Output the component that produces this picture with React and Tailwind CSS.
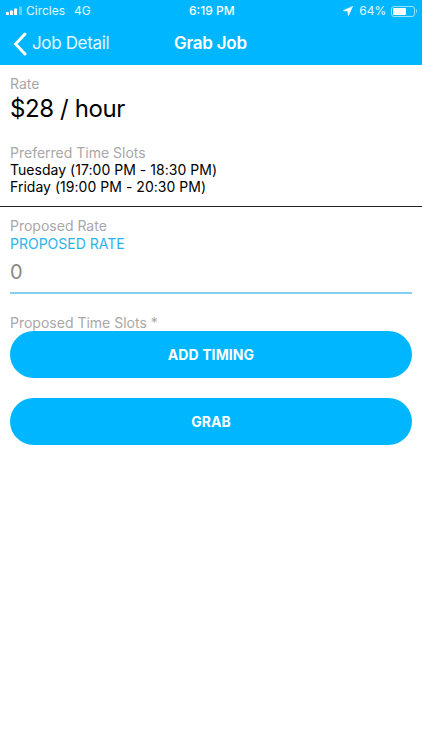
import React from "react";

export default function App() {
  return (
    <div className="w-[422px] h-[750px] bg-white flex flex-col overflow-hidden font-['Inter','Roboto',sans-serif]">
      <header className="h-[65px] bg-[#00b7ff] text-white flex flex-col shrink-0">
        <div className="h-[22px] flex items-center justify-between pl-[6px] pr-[5px] text-[12px] leading-[14px] relative">
          <div className="flex items-center">
            <svg width="18" height="10" viewBox="0 0 18 10" className="mr-[2px]">
              <rect x="0" y="6" width="3" height="3" rx="0.5" fill="#fff" />
              <rect x="4" y="4.5" width="3" height="4.5" rx="0.5" fill="#fff" />
              <rect x="8" y="2.5" width="3" height="6.5" rx="0.5" fill="#fff" />
              <rect x="13" y="0.5" width="3" height="8.5" rx="0.5" fill="#fff" fillOpacity="0.35" />
            </svg>
            <span className="opacity-90">Circles</span>
            <span className="ml-[9px] opacity-90">4G</span>
          </div>
          <span className="absolute left-[189px] font-medium">6:19 PM</span>
          <div className="flex items-center">
            <svg width="10" height="10" viewBox="0 0 10 10" className="mr-[6px]">
              <path d="M9.6 0.4 L0.4 4.6 L4.9 5.1 L5.4 9.6 Z" fill="#fff" stroke="#fff" strokeWidth="0.6" strokeLinejoin="round" />
            </svg>
            <span className="opacity-90 tracking-[0.1px]">64%</span>
            <div className="ml-[4px] w-[24px] h-[11px] border border-white/60 rounded-[3px] p-[1px]">
              <div className="h-full w-[13px] bg-white rounded-[1px]" />
            </div>
            <div className="w-[1.5px] h-[4px] bg-white/50 ml-[1px] rounded-r" />
          </div>
        </div>
        <div className="flex-1 flex items-center relative">
          <svg width="16" height="24" viewBox="0 0 16 24" className="ml-[12px]">
            <path d="M13 2 L3.5 12 L13 22" fill="none" stroke="#fff" strokeWidth="3" strokeLinecap="round" strokeLinejoin="round" />
          </svg>
          <span className="ml-[4px] text-[17px] tracking-[-0.35px] text-white/90">Job Detail</span>
          <span className="absolute left-[174px] text-[17px] tracking-[-0.25px] font-semibold">Grab Job</span>
        </div>
      </header>

      <main className="flex flex-col pt-[10px]">
        <section className="px-[10px] pb-[11px] border-b border-[#222]">
          <div className="text-[14px] leading-[17px] text-[#a8a8a8]">Rate</div>
          <div className="text-[24px] leading-[32px] tracking-[-0.4px] text-black mt-[1px]">$28 / hour</div>
          <div className="text-[14px] leading-[17px] text-[#a8a8a8] mt-[19px]">Preferred Time Slots</div>
          <div className="text-[14px] leading-[17px] tracking-[0.03px] text-black">Tuesday (17:00 PM - 18:30 PM)</div>
          <div className="text-[14px] leading-[17px] tracking-[0.03px] text-black">Friday (19:00 PM - 20:30 PM)</div>
        </section>

        <section className="px-[10px] pt-[10px]">
          <div className="text-[14px] leading-[17px] text-[#a8a8a8]">Proposed Rate</div>
          <div className="text-[14px] leading-[17px] text-[#2bb3e8] mt-[1px]">PROPOSED RATE</div>
          <div className="h-[42px] flex items-center text-[20px] text-[#888] border-b-2 border-[#85cff5]">0</div>
          <div className="text-[14px] leading-[17px] text-[#a8a8a8] mt-[20px]">Proposed Time Slots *</div>
          <button className="w-full h-[47px] rounded-full bg-[#00b7ff] text-white text-[14px] tracking-[0.1px] font-bold flex items-center justify-center">ADD TIMING</button>
          <button className="mt-[20px] w-full h-[47px] rounded-full bg-[#00b7ff] text-white text-[14px] font-bold flex items-center justify-center">GRAB</button>
        </section>
      </main>
    </div>
  );
}
